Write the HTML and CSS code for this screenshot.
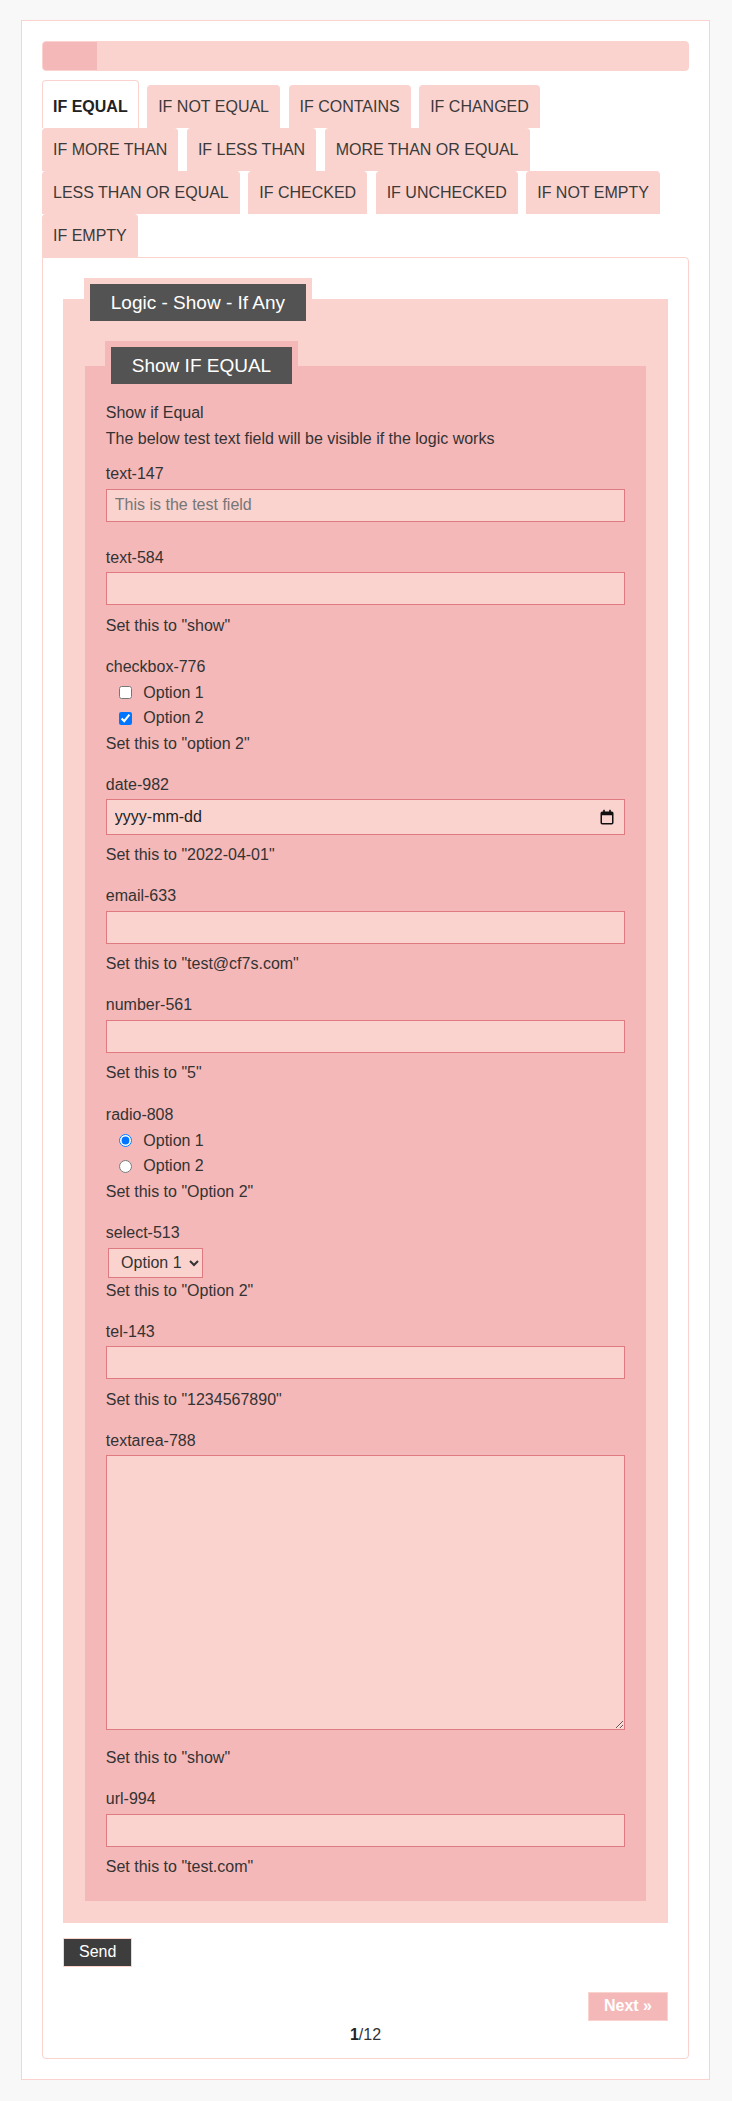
FILE: index.html
```html
<!DOCTYPE html>
<html lang="en">
<head>
<meta charset="utf-8">
<title>Logic - Show - If Any</title>
<link rel="stylesheet" href="styles.css">
</head>
<body>
<div class="wrap">
  <div class="progress"><div class="progress-fill" style="width:8.333%"></div></div>
  <ul class="tabs">
    <li class="tab active">IF EQUAL</li>
    <li class="tab">IF NOT EQUAL</li>
    <li class="tab">IF CONTAINS</li>
    <li class="tab">IF CHANGED</li>
    <li class="tab">IF MORE THAN</li>
    <li class="tab">IF LESS THAN</li>
    <li class="tab">MORE THAN OR EQUAL</li>
    <li class="tab">LESS THAN OR EQUAL</li>
    <li class="tab">IF CHECKED</li>
    <li class="tab">IF UNCHECKED</li>
    <li class="tab">IF NOT EMPTY</li>
    <li class="tab">IF EMPTY</li>
  </ul>
  <div class="panel">
    <form class="form">
      <div class="group outer">
        <div class="legend"><span class="legend-text">Logic - Show - If Any</span></div>
        <div class="group inner">
          <div class="legend legend-inner"><span class="legend-text">Show IF EQUAL</span></div>
          <div class="intro">
            <div class="line">Show if Equal</div>
            <div class="line">The below test text field will be visible if the logic works</div>
          </div>

          <div class="field">
            <label class="label">text-147</label>
            <input class="control" type="text" placeholder="This is the test field">
          </div>

          <div class="field">
            <label class="label">text-584</label>
            <input class="control" type="text">
            <div class="hint">Set this to "show"</div>
          </div>

          <div class="field">
            <div class="label">checkbox-776</div>
            <label class="option"><input class="check" type="checkbox"><span>Option 1</span></label>
            <label class="option"><input class="check" type="checkbox" checked><span>Option 2</span></label>
            <div class="hint">Set this to "option 2"</div>
          </div>

          <div class="field">
            <label class="label">date-982</label>
            <div class="date-wrap">
              <input class="control date" type="text" value="yyyy-mm-dd">
              <svg class="cal-icon" width="14" height="16" viewBox="0 0 14 16" aria-hidden="true">
                <rect x="1.25" y="3.25" width="11.5" height="11.5" rx="1" fill="none" stroke="#111" stroke-width="1.5"/>
                <rect x="1.25" y="3.25" width="11.5" height="3" fill="#111"/>
                <rect x="3.2" y="0.8" width="1.6" height="3.2" fill="#111"/>
                <rect x="9.2" y="0.8" width="1.6" height="3.2" fill="#111"/>
              </svg>
            </div>
            <div class="hint">Set this to "2022-04-01"</div>
          </div>

          <div class="field">
            <label class="label">email-633</label>
            <input class="control" type="email">
            <div class="hint">Set this to "test@cf7s.com"</div>
          </div>

          <div class="field">
            <label class="label">number-561</label>
            <input class="control" type="text">
            <div class="hint">Set this to "5"</div>
          </div>

          <div class="field">
            <div class="label">radio-808</div>
            <label class="option"><input class="check" type="radio" name="radio-808" checked><span>Option 1</span></label>
            <label class="option"><input class="check" type="radio" name="radio-808"><span>Option 2</span></label>
            <div class="hint">Set this to "Option 2"</div>
          </div>

          <div class="field">
            <label class="label">select-513</label>
            <select class="select">
              <option>Option 1</option>
              <option>Option 2</option>
            </select>
            <div class="hint">Set this to "Option 2"</div>
          </div>

          <div class="field">
            <label class="label">tel-143</label>
            <input class="control" type="tel">
            <div class="hint">Set this to "1234567890"</div>
          </div>

          <div class="field">
            <label class="label">textarea-788</label>
            <textarea class="control area"></textarea>
            <div class="hint">Set this to "show"</div>
          </div>

          <div class="field last">
            <label class="label">url-994</label>
            <input class="control" type="url">
            <div class="hint">Set this to "test.com"</div>
          </div>
        </div>
      </div>

      <div class="actions"><button type="button" class="send">Send</button></div>
      <div class="pager"><button type="button" class="next">Next »</button></div>
      <div class="count"><b>1</b>/12</div>
    </form>
  </div>
</div>
</body>
</html>
```

FILE: styles.css
```css
* { box-sizing: border-box; }

html, body { margin: 0; }

body {
  padding: 20px 22px 20px 21px;
  background: #f8f8f8;
  font-family: "Liberation Sans", Arial, sans-serif;
  font-size: 16px;
  color: #333;
}

.wrap {
  background: #fff;
  border: 1px solid #fad3cf;
  padding: 20px 20px 20px 20px;
}

.progress {
  height: 29.5px;
  background: #fad3cf;
  border: 1px solid #fad3cf;
  border-radius: 4px;
  overflow: hidden;
  margin-bottom: 9.5px;
}
.progress-fill {
  height: 100%;
  background: #f5b8b9;
}

.tabs {
  list-style: none;
  margin: 0;
  padding: 0;
  display: flex;
  flex-wrap: wrap;
  align-items: flex-end;
}
.tab {
  height: 43px;
  line-height: 41px;
  padding: 0 10px;
  margin-right: 8.5px;
  background: #fad3cf;
  border: 1px solid #fad3cf;
  border-bottom: 0;
  border-radius: 4px 4px 0 0;
  color: #3a3a3a;
  white-space: nowrap;
}
.tab.active {
  height: 48px;
  padding-top: 5px;
  background: #fff;
  border-color: #fad3cf;
  font-weight: bold;
  color: #222;
}

.panel {
  border: 1px solid #fad3cf;
  border-radius: 0 4px 4px 4px;
  padding: 20px 20px 10px 20px;
}

.form { margin: 0; }

.group { display: flow-root; }

.outer {
  background: #fad3cf;
  margin-top: 20.7px;
  padding: 0 22.3px 22px;
}
.outer > .legend {
  margin: -20.7px 0 0 -1px;
}

.legend {
  display: table;
  padding: 6px;
  background: #fad3cf;
}
.legend-text {
  display: block;
  background: #535353;
  color: #fff;
  font-size: 19px;
  line-height: 37px;
  padding: 0 20.5px;
  white-space: nowrap;
}

.inner {
  background: #f5b8b9;
  margin-top: 38.7px;
  padding: 0 20.5px 20.7px;
}
.inner > .legend {
  background: #f5b8b9;
  margin: -24.7px 0 0 -0.5px;
}

.intro { margin: 9.7px 0 9.6px; }
.line, .label, .hint {
  display: block;
  line-height: 26px;
}

.field {
  display: flow-root;
  margin-bottom: 15.3px;
}
.field.last { margin-bottom: 0; }

.control {
  display: block;
  width: 100%;
  height: 33px;
  margin: 1.5px 0 7.5px;
  padding: 0 8px;
  background: #fad3cf;
  border: 1px solid #df7b80;
  border-radius: 0;
  font-family: inherit;
  font-size: 16px;
  color: #333;
  outline: none;
}
.control::placeholder { color: #767676; opacity: 1; }

.date-wrap {
  position: relative;
  margin: 1px 0 7.3px;
}
.control.date {
  height: 35.4px;
  margin: 0;
  color: #222;
}
.cal-icon {
  position: absolute;
  right: 11.5px;
  top: 9.5px;
}

.control.area {
  height: 275px;
  margin: 0.6px 0 15.3px;
  padding: 4px 8px;
  resize: both;
}

.option {
  display: flex;
  align-items: center;
  height: 25.5px;
}
.check {
  width: 13px;
  height: 13px;
  margin: 0 11.7px 0 12.8px;
}

.select {
  display: block;
  width: 95px;
  height: 30px;
  margin: 1.6px 0 0 2.3px;
  padding: 0 2px 0 8px;
  background: #fad3cf;
  border: 1px solid #df7b80;
  border-radius: 0;
  font-family: inherit;
  font-size: 16px;
  color: #333;
}

.actions { margin-top: 15px; }
.send {
  height: 28.6px;
  padding: 0 15px;
  background: #3d3d3d;
  color: #fff;
  border: 1px solid #fad3cf;
  border-radius: 0;
  font-family: inherit;
  font-size: 16px;
  line-height: 1;
}

.pager {
  display: flex;
  justify-content: flex-end;
  margin-top: 25px;
}
.next {
  height: 29.4px;
  padding: 0 15px;
  background: #f5b8b9;
  color: #fff;
  border: 1px solid #fad3cf;
  border-radius: 0;
  font-family: inherit;
  font-size: 16px;
  font-weight: bold;
  line-height: 1;
}

.count {
  text-align: center;
  line-height: 26px;
  margin-top: 1.3px;
  color: #333;
}
.count b { color: #222; }
```
